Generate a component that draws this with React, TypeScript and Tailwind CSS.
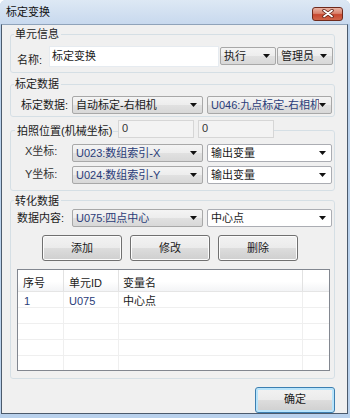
import React from "react";

const Arrow = () => (
  <svg width="7" height="4" viewBox="0 0 7 4" className="shrink-0">
    <path d="M0 0h7L3.5 4z" fill="#111" />
  </svg>
);

type ComboProps = { text: string; className: string; white?: boolean; blue?: boolean };

const Combo = ({ text, className, white, blue }: ComboProps) => (
  <div
    className={`flex h-[18px] items-center rounded-[2px] border pl-[3px] pr-[5px] ${
      white
        ? "border-[#abadb3] bg-white"
        : "border-[#a8a8a8] bg-[linear-gradient(#f4f4f4,#ededed_50%,#e1e1e1_50%,#d8d8d8)]"
    } ${className}`}
  >
    <span
      className={`min-w-0 flex-1 overflow-hidden whitespace-nowrap leading-[14px] ${
        blue ? "text-[#2a3c78]" : "text-[#1a1a1a]"
      }`}
    >
      {text}
    </span>
    <Arrow />
  </div>
);

const Button = ({ text }: { text: string }) => (
  <button className="flex h-[26px] w-[80px] items-center justify-center rounded-[3px] border border-[#707070] bg-[linear-gradient(#f2f2f2,#ebebeb_50%,#dddddd_50%,#cfcfcf)] leading-[14px] text-[#1a1a1a] shadow-[inset_0_0_0_1px_#fcfcfc]">
    {text}
  </button>
);

const rows = [
  { no: "1", id: "U075", name: "中心点" },
  { no: "", id: "", name: "" },
  { no: "", id: "", name: "" },
  { no: "", id: "", name: "" },
  { no: "", id: "", name: "" },
];

const App = () => {
  return (
    <div className="flex h-[418px] w-[350px] flex-col overflow-hidden rounded-t-[6px] bg-[#b9d1ec] pb-[4px] pl-[1px] pr-[2px] font-['Liberation_Sans','Noto_Sans_CJK_SC',sans-serif] text-[11px] text-[#1a1a1a]">
      {/* title bar */}
      <div className="-ml-[1px] -mr-[2px] flex h-[24px] shrink-0 items-center bg-linear-to-b from-[#dde8f4] to-[#c8d9ee] pl-[6px] pr-[7px]">
        <span className="leading-[14px] text-[#111]">标定变换</span>
        <div className="ml-auto mt-[3px] flex h-[14px] w-[31px] items-center justify-center rounded-[3px] border border-[#6f2a1c] bg-[linear-gradient(#eab3a4,#d9826c_45%,#c7472f_55%,#d0664a)]">
          <svg width="12" height="9" viewBox="0 0 12 9">
            <path d="M2 1.5l8 6M10 1.5l-8 6" stroke="#5a1d12" strokeWidth="3.4" strokeLinecap="round" />
            <path d="M2 1.5l8 6M10 1.5l-8 6" stroke="#fff" strokeWidth="1.8" strokeLinecap="round" />
          </svg>
        </div>
      </div>

      {/* client area */}
      <div className="flex flex-1 flex-col overflow-hidden border border-[#4b5a6c] border-t-[#8fa3ba] bg-[#f0f0f0]">
        {/* 单元信息 */}
        <fieldset className="ml-[8px] mt-[1px] h-[48px] w-[325px] rounded-[3px] border border-[#d5dfe5]">
          <legend className="ml-[3px] pl-[1px] pr-[2px] leading-[16px]">单元信息</legend>
          <div className="mt-[4px] flex items-start">
            <span className="ml-[6px] mt-[7px] w-[32px] leading-[14px]">名称:</span>
            <div className="h-[21px] w-[170px] border border-[#e6ebf0] bg-white pl-[2px] pt-[2px] leading-[14px]">标定变换</div>
            <div className="ml-[1px] mt-[1px] flex">
              <Combo text="执行" className="w-[56px]" />
              <Combo text="管理员" className="ml-[1px] w-[56px]" />
            </div>
          </div>
        </fieldset>

        {/* 标定数据 */}
        <fieldset className="ml-[8px] mt-[3px] h-[41px] w-[325px] rounded-[3px] border border-[#d5dfe5]">
          <legend className="ml-[3px] pl-[1px] pr-[2px] leading-[16px]">标定数据</legend>
          <div className="mt-[4px] flex items-center">
            <span className="ml-[10px] w-[51px] leading-[14px]">标定数据:</span>
            <Combo text="自动标定-右相机" className="w-[131px]" />
            <Combo text="U046:九点标定-右相机" className="ml-[4px] w-[125px]" blue />
          </div>
        </fieldset>

        {/* 拍照位置 */}
        <fieldset className="ml-[8px] mt-[3px] h-[72px] w-[325px] rounded-[3px] border border-[#d5dfe5]">
          <legend className="ml-[4px] flex h-[22px] items-start pl-[2px]">
            <span className="mt-[4px] w-[96px] whitespace-nowrap leading-[14px]">拍照位置(机械坐标)</span>
            <span className="mt-[11px] h-px w-[5px] bg-[#d5dfe5]" />
            <div className="h-[18px] w-[76px] border border-[#d6d6d6] bg-[#f3f3f3] pl-[3px] leading-[14px] text-[#333]">0</div>
            <div className="ml-[4px] h-[18px] w-[76px] border border-[#d6d6d6] bg-[#f3f3f3] pl-[3px] leading-[14px] text-[#333]">0</div>
          </legend>
          <div className="mt-[2px] flex items-center">
            <span className="ml-[14px] w-[47px] -translate-y-[2px] leading-[14px] text-[#333]">X坐标:</span>
            <Combo text="U023:数组索引-X" className="w-[131px]" blue />
            <Combo text="输出变量" className="ml-[4px] w-[125px]" white />
          </div>
          <div className="mt-[4px] flex items-center">
            <span className="ml-[14px] w-[47px] -translate-y-[1px] leading-[14px] text-[#333]">Y坐标:</span>
            <Combo text="U024:数组索引-Y" className="w-[131px]" blue />
            <Combo text="输出变量" className="ml-[4px] w-[125px]" white />
          </div>
        </fieldset>

        {/* 转化数据 */}
        <fieldset className="ml-[8px] mt-[2px] h-[189px] w-[325px] rounded-[3px] border border-[#d5dfe5]">
          <legend className="ml-[3px] pl-[1px] pr-[2px] leading-[16px]">转化数据</legend>
          <div className="flex items-center">
            <span className="ml-[6px] w-[55px] leading-[14px]">数据内容:</span>
            <Combo text="U075:四点中心" className="w-[131px]" blue />
            <Combo text="中心点" className="ml-[4px] w-[125px]" white />
          </div>
          <div className="ml-[31px] mt-[8px] flex gap-[8px]">
            <Button text="添加" />
            <Button text="修改" />
            <Button text="删除" />
          </div>
          <div className="ml-[6px] mt-[8px] h-[102px] w-[313px] overflow-hidden border border-[#828790] bg-white">
            <div className="flex h-[22px] border-b border-[#e5e5e5] bg-[linear-gradient(#ffffff,#ffffff_55%,#f3f4f6)] leading-[14px]">
              <div className="w-[46px] border-r border-[#e2e2e2] pl-[5px] pt-[6px]">序号</div>
              <div className="w-[55px] border-r border-[#e2e2e2] pl-[5px] pt-[6px]">单元ID</div>
              <div className="w-[184px] border-r border-[#e2e2e2] pl-[4px] pt-[6px]">变量名</div>
              <div className="flex-1" />
            </div>
            {rows.map((r, i) => (
              <div key={i} className="flex h-[16px] border-b border-[#efefef] leading-[14px]">
                <div className="w-[46px] border-r border-[#efefef] pl-[6px] pt-[2px] text-[#2a3c78]">{r.no}</div>
                <div className="w-[55px] border-r border-[#efefef] pl-[5px] pt-[2px] text-[#2a3c78]">{r.id}</div>
                <div className="w-[184px] border-r border-[#efefef] pl-[4px] pt-[2px]">{r.name}</div>
                <div className="flex-1" />
              </div>
            ))}
          </div>
        </fieldset>

        <div className="mr-[12px] mt-[8px] flex justify-end">
          <button className="flex h-[26px] w-[80px] items-center justify-center rounded-[3px] border border-[#3c7fb1] bg-[linear-gradient(#f2f2f2,#ebebeb_50%,#dddddd_50%,#cfcfcf)] pb-[2px] leading-[14px] text-[#1a1a1a] shadow-[inset_0_0_0_2px_#b9e4fb]">
            确定
          </button>
        </div>
      </div>
    </div>
  );
};

export default App;
